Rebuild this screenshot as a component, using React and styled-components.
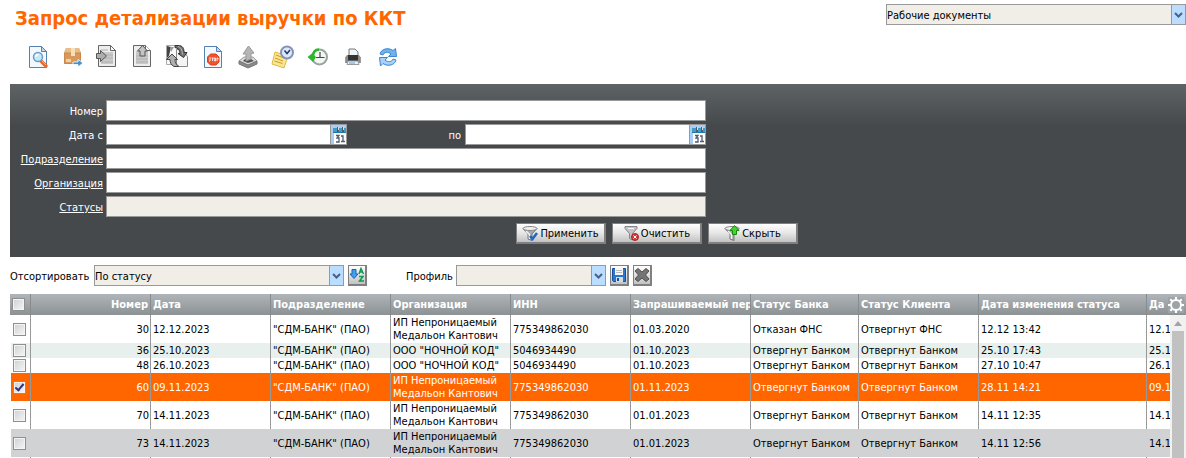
import styled, { createGlobalStyle } from "styled-components"

const tools = [
  { name: "Просмотр", icon: <ViewIcon /> },
  { name: "Отправить", icon: <SendIcon /> },
  { name: "Импорт", icon: <ImportIcon /> },
  { name: "Экспорт", icon: <ExportIcon /> },
  { name: "Обмен", icon: <ExchangeIcon /> },
  { name: "Отозвать", icon: <StopIcon /> },
  { name: "Выгрузить", icon: <UploadIcon /> },
  { name: "Отложить", icon: <ScheduleIcon /> },
  { name: "История", icon: <HistoryIcon /> },
  { name: "Печать", icon: <PrintIcon /> },
  { name: "Обновить", icon: <RefreshIcon /> },
]

const columns = [
  { title: "Номер", width: 120, align: "right" },
  { title: "Дата", width: 120 },
  { title: "Подразделение", width: 120 },
  { title: "Организация", width: 120 },
  { title: "ИНН", width: 120 },
  { title: "Запрашиваемый пер", width: 120 },
  { title: "Статус Банка", width: 108 },
  { title: "Статус Клиента", width: 120 },
  { title: "Дата изменения статуса", width: 168 },
  { title: "Да" },
]

const bank = '"СДМ-БАНК" (ПАО)'
const ip = "ИП Непроницаемый Медальон Кантович"
const ooo = 'ООО "НОЧНОЙ КОД"'

const rows = [
  { cells: ["30", "12.12.2023", bank, ip, "775349862030", "01.03.2020", "Отказан ФНС", "Отвергнут ФНС", "12.12 13:42", "12.1"] },
  { look: "even", cells: ["36", "25.10.2023", bank, ooo, "5046934490", "01.10.2023", "Отвергнут Банком", "Отвергнут Банком", "25.10 17:43", "25.1"] },
  { cells: ["48", "26.10.2023", bank, ooo, "5046934490", "01.10.2023", "Отвергнут Банком", "Отвергнут Банком", "27.10 10:47", "26.1"] },
  { look: "selected", cells: ["60", "09.11.2023", bank, ip, "775349862030", "01.11.2023", "Отвергнут Банком", "Отвергнут Банком", "28.11 14:21", "09.1"] },
  { cells: ["70", "14.11.2023", bank, ip, "775349862030", "01.01.2023", "Отвергнут Банком", "Отвергнут Банком", "14.11 12:35", "14.1"] },
  { look: "hover", cells: ["73", "14.11.2023", bank, ip, "775349862030", "01.01.2023", "Отвергнут Банком", "Отвергнут Банком", "14.11 12:56", "14.1"] },
]

export default function App() {
  return (
    <Page>
      <GlobalStyle />
      <Header>
        <Title>Запрос детализации выручки по ККТ</Title>
        <Dropdown $width={300} label="Раздел" value="Рабочие документы" />
      </Header>

      <Toolbar>
        {tools.map((tool) => (
          <Tool key={tool.name} type="button" aria-label={tool.name}>{tool.icon}</Tool>
        ))}
      </Toolbar>

      <Filter onSubmit={(e) => e.preventDefault()}>
        <Field>
          <Label htmlFor="number">Номер</Label>
          <Input id="number" type="text" />
        </Field>
        <Field>
          <Label htmlFor="from">Дата с</Label>
          <DateRange>
            <DateField id="from" />
            <DateTo>
              <Label htmlFor="to">по</Label>
              <DateField id="to" />
            </DateTo>
          </DateRange>
        </Field>
        <Field>
          <Label htmlFor="division"><a href="#division">Подразделение</a></Label>
          <Input id="division" type="text" />
        </Field>
        <Field>
          <Label htmlFor="organization"><a href="#organization">Организация</a></Label>
          <Input id="organization" type="text" />
        </Field>
        <Field>
          <Label htmlFor="statuses"><a href="#statuses">Статусы</a></Label>
          <Input id="statuses" type="text" readOnly />
        </Field>
        <Actions>
          <Button type="submit"><ApplyIcon />Применить</Button>
          <Button type="button"><ClearIcon />Очистить</Button>
          <Button type="button"><HideIcon />Скрыть</Button>
        </Actions>
      </Filter>

      <SortBar>
        <SortLabel htmlFor="sort">Отсортировать</SortLabel>
        <Dropdown id="sort" $width={250} value="По статусу" />
        <SmallButton type="button" aria-label="Направление сортировки"><SortIcon /></SmallButton>
        <ProfileLabel htmlFor="profile">Профиль</ProfileLabel>
        <Dropdown id="profile" $width={150} value="" />
        <SmallButton type="button" aria-label="Сохранить профиль"><SaveIcon /></SmallButton>
        <SmallButton type="button" aria-label="Удалить профиль"><DeleteIcon /></SmallButton>
      </SortBar>

      <Grid>
        <Table>
          <colgroup>
            <Col $width={21} />
            {columns.map((column) => <Col key={column.title} $width={column.width} />)}
          </colgroup>
          <thead>
            <tr>
              <Th><Checkbox type="checkbox" aria-label="Выбрать все" /></Th>
              {columns.map((column) => (
                <Th key={column.title} $align={column.align}>{column.title}</Th>
              ))}
            </tr>
          </thead>
          <tbody>
            {rows.map((row) => (
              <Row key={row.cells[0]} $look={row.look}>
                <Td>
                  <Checkbox type="checkbox" aria-label={row.cells[0]} defaultChecked={row.look === "selected"} />
                </Td>
                {row.cells.map((cell, i) => (
                  <Td key={i} $align={columns[i].align} $wrap={i === 3}>{cell}</Td>
                ))}
              </Row>
            ))}
            <Row>
              <Td />
              {columns.map((column) => <Td key={column.title} />)}
            </Row>
          </tbody>
        </Table>
        <Side>
          <SideHead />
          <Track>
            <Arrow viewBox="0 0 16 16"><path d="M4 11 8 6l4 5z" fill="#a3a3a3" /></Arrow>
            <Thumb />
          </Track>
        </Side>
        <Settings type="button" aria-label="Настройка колонок"><GearIcon /></Settings>
      </Grid>
    </Page>
  )
}

function Dropdown({ id, label, value, $width }) {
  return (
    <SelectBox $width={$width}>
      <select id={id} aria-label={label} defaultValue={value}>
        <option value={value}>{value}</option>
      </select>
      <Chevron>
        <svg width="9" height="6" viewBox="0 0 9 6">
          <path d="M1 1l3.500 3.500L8 1" fill="none" stroke="#47628a" strokeWidth="2" />
        </svg>
      </Chevron>
    </SelectBox>
  )
}

function DateField({ id }) {
  return (
    <DateBox>
      <input id={id} type="text" />
      <button type="button" aria-label="Календарь">
        <svg width="15" height="19" viewBox="0 0 15 19">
          <rect width="15" height="19" fill="#a9cdf3" />
          <path d="M2 3h13v5H2z" fill="#3f9cc9" />
          <path d="M2 7h13v1H2z" fill="#2277aa" />
          <path d="M3 8h12v11H3z" fill="#fff" />
          <path d="M6 2h2v5H6zM11 2h2v5h-2z" fill="#555b66" />
          <path d="M7 2h1v3H7zM12 2h1v3h-1z" fill="#d9dde2" />
          <path d="M5 10.500h3L6 13h2v4H5M10 11h2v5m-2 .500h4" fill="none" stroke="#525a6b" strokeWidth="1.300" />
        </svg>
      </button>
    </DateBox>
  )
}

function Sheet() {
  return (
    <g transform="translate(3 1)">
      <path d="M.5.500h12l5 5v16H.5z" fill="#f3f8ff" stroke="#5580b0" />
      <path d="M12.500.500v5h5z" fill="#c3d6ea" stroke="#5580b0" />
    </g>
  )
}

function ViewIcon() {
  return (
    <Svg24>
      <Sheet />
      <path d="m15 16 5 5" stroke="#e8672a" strokeWidth="3.500" strokeLinecap="round" />
      <path d="m15.500 15.500 4.500 4.500" stroke="#f9b36a" strokeWidth="1" />
      <circle cx="12" cy="12" r="4.500" fill="#bfeafb" stroke="#6d9cc4" strokeWidth="1.500" />
      <path d="M9.500 12a3 3 0 0 1 3-2.500" fill="none" stroke="#fff" strokeWidth="1.500" />
    </Svg24>
  )
}

function SendIcon() {
  return (
    <Svg24>
      <path d="M5 3h13l2 5v11H3V8z" fill="#d79a5c" />
      <path d="M5 3h13l2 5H3z" fill="#e9bd88" />
      <path d="M3.500 8h16v10.500h-16z" fill="none" stroke="#c58a50" />
      <path d="M10 3h4v8h-4z" fill="#f6dfba" />
      <path d="M5 14h5v3H5z" fill="#f1cfa0" />
      <path d="M12 17h5v-2.500l5 3.500-5 4v-2.500h-5z" fill="#3d93d6" stroke="#fff" strokeWidth=".8" />
    </Svg24>
  )
}

function ImportIcon() {
  return (
    <Svg24>
      <path d="M2.500.500h12l5 5v16h-17z" fill="#ededed" stroke="#666" />
      <path d="M14.500.500v5h5z" fill="#fff" stroke="#666" />
      <path d="M5 7h12v12H5z" fill="#c9c9c9" />
      <path d="M5 5h7M8 10h9M8 13h9M5 17h12" stroke="#b0b0b0" />
      <path d="M.500 8.500h4v-3l6 5.500-6 5.500v-3h-4z" fill="#adadad" stroke="#555" />
    </Svg24>
  )
}

function ExportIcon() {
  return (
    <Svg24>
      <path d="M2.500.500h12l5 5v16h-17z" fill="#ededed" stroke="#666" />
      <path d="M14.500.500v5h5" fill="#fff" stroke="#666" />
      <path d="M5 6h12v13H5z" fill="#c9c9c9" />
      <path d="M5 11h12M5 14h12M5 17h12" stroke="#b0b0b0" />
      <path d="m11.500.500 5 5.500H14v5H9V6H6.500z" fill="#c4c4c4" stroke="#555" />
    </Svg24>
  )
}

function ExchangeIcon() {
  return (
    <Svg24>
      <path d="M.500.500h9l3 4v15H.500z" fill="#fafafa" stroke="#aaa" />
      <path d="M10.500 4.500h6l5 7v10h-11z" fill="#f4f4f4" stroke="#888" />
      <path d="M9 .500h3c5 0 6 3 6 7h3l-3.500 5L12 8.500h2C14 5 12 3 9 2.500z" fill="#707070" stroke="#333" />
      <path d="M12 1.500c3 1 4 3 4.500 8" stroke="#b5b5b5" fill="none" />
      <path d="m6 9 5.500 5.500H9c0 3 1 5 4 7H8c-3-1.500-4-4-4-7H.500z" fill="#b0b0b0" stroke="#444" />
      <path d="M1 1l4 1-2 9-2 2z" fill="#444" />
      <path d="M4 2h4L5 7z" fill="#999" />
    </Svg24>
  )
}

function StopIcon() {
  return (
    <Svg24>
      <Sheet />
      <path d="M9.500 9h5.500l3 3v5l-3 3H9.500l-3-3v-5z" fill="#f0512f" stroke="#dd3d20" />
      <path d="M8 13h2m-1 .500v2.500m-1 0h1m1.500-3h2m-1 0v3m1.500-3h1.500v3H13.500zm3 3v-3h1v1.500" stroke="#fff" strokeWidth=".8" fill="none" />
    </Svg24>
  )
}

function UploadIcon() {
  return (
    <Svg24>
      <path d="m3 16 5-4h9l4 4-8 5z" fill="#dcdcdc" stroke="#999" />
      <path d="m3 16 9 4 9-4v3l-9 4-9-4z" fill="#8a8a8a" stroke="#777" />
      <path d="m7 16 5 2 6-2-3-2H9z" fill="#555" />
      <path d="m12.500 1 5.500 7-3 .5V14l-5 2V9L7 9z" fill="#b5b5b5" stroke="#999" />
    </Svg24>
  )
}

function ScheduleIcon() {
  return (
    <Svg24>
      <path d="m4 7 13 4-4 12L1 19z" fill="#fbe68f" stroke="#dfba4a" />
      <path d="m5 10 8 3M4 13l8 3M3.500 16l8 2.500" stroke="#c99b27" />
      <circle cx="16" cy="7.500" r="6" fill="#dbe8fa" stroke="#8491b8" strokeWidth="2" />
      <path d="m13.500 5.500 2.500 3 3-3.500" fill="none" stroke="#26375c" strokeWidth="1.500" />
    </Svg24>
  )
}

function HistoryIcon() {
  return (
    <Svg24>
      <circle cx="13.500" cy="12" r="7.500" fill="#f3f6f3" stroke="#98a59c" strokeWidth="2" />
      <path d="M14 7v5.500h4.500M10 12.500h4" fill="none" stroke="#3d4b43" strokeWidth="1.200" />
      <path d="M13 4.500C9 4.500 7 7.500 7 12" fill="none" stroke="#2eb52e" strokeWidth="2.500" />
      <path d="M1.500 12 6 8.500l4 3.500-3 5z" fill="#2eb52e" />
    </Svg24>
  )
}

function PrintIcon() {
  return (
    <Svg24>
      <path d="M8 4h6l3 3v4H8z" fill="#eef4fa" stroke="#777" />
      <path d="M4 12h2v6H4zM18 12h2v6h-2z" fill="#aaa" />
      <path d="M6 10h12l1.500 2v6h-15v-6z" fill="#8b8b8b" />
      <path d="M7 10h10v6H7z" fill="#333" />
      <path d="M7 16h10l1 3.500H6z" fill="#e8eff7" stroke="#999" />
      <path d="M8 18h6" stroke="#5ba4d9" />
    </Svg24>
  )
}

function RefreshIcon() {
  return (
    <Svg24>
      <path d="M4 9c1-5 8-7 13-3.500L19.500 3.500l1 8h-8L15 9C12 6.500 8 7 7 10z" fill="#6db3ef" stroke="#3f86cf" />
      <path d="M20 15c-1 5-8 7-13 3.500L4.500 21l-1-8.500h8L9 15c3 2.500 7 2 8-1z" fill="#a8d1f7" stroke="#3f86cf" />
    </Svg24>
  )
}

function Funnel() {
  return (
    <g>
      <path d="M1 3.500 6 9v5l4 1.500V9l5-5.500z" fill="#a9a9a9" stroke="#777" />
      <path d="M4 6l3.500 3.500V14" stroke="#f4f4f4" fill="none" strokeWidth="1.500" />
      <ellipse cx="8" cy="3.500" rx="7" ry="2" fill="#f0f0f0" stroke="#888" />
    </g>
  )
}

function ApplyIcon() {
  return (
    <Svg16>
      <Funnel />
      <path d="m8 11 2.500 3L15 8" fill="none" stroke="#1f66c8" strokeWidth="2.500" />
    </Svg16>
  )
}

function ClearIcon() {
  return (
    <Svg16>
      <path d="M2 1.500h12v2L9.500 8.500V15l-3-1.500v-5L2 3.500z" fill="#c4c4c8" stroke="#85858a" />
      <path d="M5 3.500h6" stroke="#f7f7f7" />
      <circle cx="12" cy="12" r="3.500" fill="#d63b3b" stroke="#a92020" />
      <path d="m10.500 10.500 3 3m0-3-3 3" stroke="#fff" />
    </Svg16>
  )
}

function HideIcon() {
  return (
    <Svg16>
      <Funnel />
      <path d="m10.500.500 4.500 5h-2.500v4h-4v-4H6z" fill="#47d32e" stroke="#188a12" />
    </Svg16>
  )
}

function SortIcon() {
  return (
    <Svg16>
      <path d="M3 2.500h4V7h2L5 11.500 1 7h2z" fill="#3fa0ee" stroke="#1c62ae" />
      <path d="M10 7l2-5.500L14.500 7M10.500 5H14" fill="none" stroke="#0f9a4f" strokeWidth="1.500" />
      <path d="M10 9.500h4L10.500 14H15" fill="none" stroke="#0f9a4f" strokeWidth="1.500" />
    </Svg16>
  )
}

function SaveIcon() {
  return (
    <Svg16>
      <path d="M1.500 1.500h13v13h-12l-1-1z" fill="#2b77d0" stroke="#174f9c" />
      <path d="M4 1h8v7H4z" fill="#f5f5f5" />
      <path d="M5 3.500h6M5 5.500h6" stroke="#bbb" />
      <path d="M5 10h7v5H5z" fill="#d4dbe3" />
      <path d="M6 11h2v3H6z" fill="#174f9c" />
    </Svg16>
  )
}

function DeleteIcon() {
  return (
    <Svg16>
      <path d="M4 1.500 8 5l4-3.500L15 4l-3.500 4 3.500 4-3 2.500L8 11l-4 3.500L1 12l3.500-4L1 4z" fill="#747474" stroke="#505050" />
    </Svg16>
  )
}

function GearIcon() {
  return (
    <Svg16>
      <circle cx="8" cy="8" r="5" fill="none" stroke="#fff" strokeWidth="2" />
      <path d="M8 0v3M8 13v3M0 8h3M13 8h3M2.300 2.300l2 2M11.700 11.700l2 2M2.300 13.700l2-2M11.700 4.300l2-2" stroke="#fff" strokeWidth="2" />
    </Svg16>
  )
}

const GlobalStyle = createGlobalStyle`
  *, *::before {
    box-sizing: border-box;
  }
  body {
    margin: 0;
    background: #fff;
  }
  body, button, input, select {
    font-family: Tahoma, "DejaVu Sans Condensed", "DejaVu Sans", sans-serif;
    font-size: 11px;
    line-height: 13px;
    color: #000;
  }
  button, input, select {
    margin: 0;
    padding: 0;
    border: 0;
    border-radius: 0;
  }
`
const Page = styled.div`
  display: flex;
  flex-direction: column;
  height: 100vh;
  padding-left: 10px;
  overflow: hidden;
`
const Header = styled.header`
  display: flex;
  align-items: flex-start;
  justify-content: space-between;
  padding: 4px 0 0 5px;
`
const Title = styled.h1`
  margin: 0;
  font-size: 20px;
  line-height: 28px;
  color: #ff6600;
`
const SelectBox = styled.div`
  position: relative;
  width: ${(props) => props.$width}px;
  height: 21px;
  border: 1px solid #999;

  select {
    display: block;
    appearance: none;
    width: 100%;
    height: 100%;
    padding-top: 1px;
    background: #f1eee7;
  }
`
const Chevron = styled.span`
  position: absolute;
  top: 0;
  right: 0;
  bottom: 0;
  display: flex;
  align-items: center;
  justify-content: center;
  width: 14px;
  border-left: 1px solid #999;
  background: #bbddff;
  pointer-events: none;
`
const Toolbar = styled.div`
  display: flex;
  gap: 11px;
  padding: 13px 16px 15px;
`
const Tool = styled.button`
  width: 24px;
  height: 24px;
  background: none;
`
const Svg24 = styled.svg.attrs({ viewBox: "0 0 24 24", fill: "none" })`
  display: block;
  width: 24px;
  height: 24px;
`
const Svg16 = styled.svg.attrs({ viewBox: "0 0 16 16", fill: "none" })`
  display: block;
  flex: none;
  width: 16px;
  height: 16px;
`
const Filter = styled.form`
  display: flex;
  flex-direction: column;
  gap: 3px;
  padding: 16px 0 13px;
  color: #fff;
  background: linear-gradient(#5e6366, #45494c 42px);
`
const Field = styled.div`
  display: grid;
  grid-template-columns: 93px 600px;
  align-items: center;
  column-gap: 3px;
`
const Label = styled.label`
  padding-top: 2px;
  text-align: right;

  a {
    color: #fff;
  }
`
const Input = styled.input`
  height: 21px;
  border: 1px solid #999;
  background: #fff;

  &:read-only {
    background: #f1eee7;
  }
`
const DateRange = styled.div`
  display: flex;
  justify-content: space-between;
`
const DateTo = styled.div`
  display: flex;
  align-items: center;
  gap: 4px;
`
const DateBox = styled.div`
  display: flex;
  width: 241px;
  height: 21px;
  border: 1px solid #999;

  input {
    flex: 1;
    min-width: 0;
  }
  button {
    width: 16px;
    border-left: 1px solid #999;
  }
  svg {
    display: block;
  }
`
const Actions = styled.div`
  display: flex;
  gap: 6px;
  padding: 3px 0 0 506px;
`
const Button = styled.button`
  display: flex;
  align-items: center;
  justify-content: center;
  gap: 2px;
  width: 90px;
  height: 21px;
  border: 1px solid #808080;
  border-width: 1px 2px 2px 1px;
  background: linear-gradient(#fff, #e6e6e6 50%, #c2c2c2);
`
const SortBar = styled.div`
  display: flex;
  align-items: center;
  gap: 4px;
  padding: 8px 0;
`
const SortLabel = styled.label`
  width: 80px;
  padding-top: 2px;
`
const ProfileLabel = styled.label`
  width: 46px;
  margin-left: 35px;
  padding-top: 2px;
`
const SmallButton = styled.button`
  display: flex;
  align-items: center;
  justify-content: center;
  width: 19px;
  height: 21px;
  border: 1px solid #808080;
  border-width: 1px 2px 2px 1px;
  background: linear-gradient(#fff, #c2c2c2);
`
const Grid = styled.div`
  position: relative;
  display: grid;
  grid-template-columns: minmax(0, 1fr) 16px;
  flex: 1;
  min-height: 0;
  overflow: hidden;
`
const Table = styled.table`
  align-self: start;
  width: 100%;
  table-layout: fixed;
  border-spacing: 0;
`
const Col = styled.col`
  width: ${(props) => (props.$width ? `${props.$width}px` : "auto")};
`
const Th = styled.th`
  height: 21px;
  padding: 0 2px;
  overflow: hidden;
  white-space: nowrap;
  text-align: ${(props) => props.$align || "left"};
  color: #fff;
  border-right: 1px solid #878b8e;
  background: linear-gradient(#b0b5b9, #8c9194);

  &:last-child {
    border-right: 0;
  }
`
const Td = styled.td`
  height: 15px;
  padding: 1px 1px 1px 2px;
  overflow: hidden;
  white-space: ${(props) => (props.$wrap ? "normal" : "nowrap")};
  text-align: ${(props) => props.$align || "left"};
  border-right: 1px solid #999;

  &:first-child {
    padding: 0 2px;
    border-left: 1px solid #fff;
  }
  &:last-child {
    border-right: 0;
  }
`
const looks = {
  even: "background: #e8f0ed;",
  selected: "color: #fff; background: #ff6600;",
  hover: "background: #d1d2d4;",
}
const Row = styled.tr`
  ${(props) => looks[props.$look]}

  td {
    ${(props) => props.$look === "hover" && "border-right-color: transparent;"}
  }
`
const Checkbox = styled.input`
  display: block;
  appearance: none;
  width: 13px;
  height: 13px;
  border: 1px solid #8e8f8f;
  background: linear-gradient(135deg, #cdd0d3, #f6f6f6);
  box-shadow: inset 0 0 0 1px #f4f4f4;

  &:checked::before {
    content: "";
    display: block;
    width: 5px;
    height: 9px;
    margin-left: 3px;
    border: solid #31347c;
    border-width: 0 2px 2px 0;
    transform: rotate(40deg);
  }
`
const Side = styled.div`
  display: flex;
  flex-direction: column;
`
const SideHead = styled.div`
  height: 21px;
  background: linear-gradient(#b0b5b9, #8c9194);
`
const Track = styled.div`
  display: flex;
  flex: 1;
  flex-direction: column;
  align-items: center;
  background: #f1f1f1;
`
const Arrow = styled.svg`
  width: 16px;
  height: 16px;
`
const Thumb = styled.div`
  flex: 1;
  width: 12px;
  background: #c1c1c1;
`
const Settings = styled.button`
  position: absolute;
  top: 3px;
  right: 2px;
  background: #9ea3a7;
`
